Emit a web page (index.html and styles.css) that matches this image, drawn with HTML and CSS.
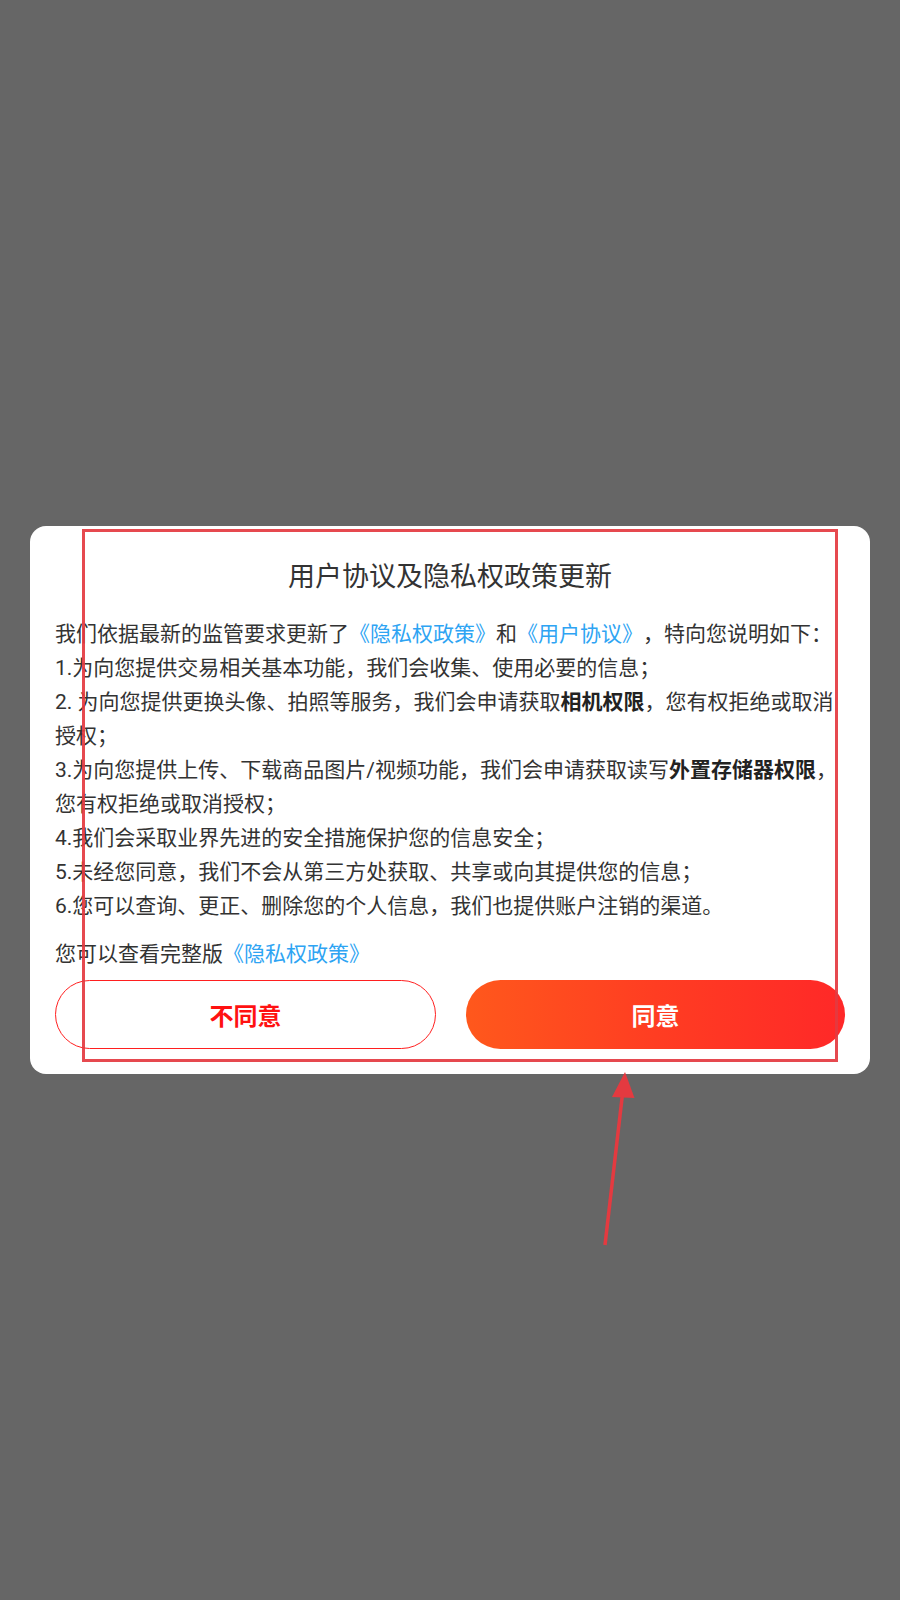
FILE: index.html
```html
<!DOCTYPE html>
<html lang="zh-CN">
<head>
<meta charset="utf-8">
<title>用户协议及隐私权政策更新</title>
<link rel="stylesheet" href="styles.css">
</head>
<body>
<div class="screen">
  <div class="dialog">
    <h1 class="title">用户协议及隐私权政策更新</h1>
    <div class="content">
      <p class="line">我们依据最新的监管要求更新了<span class="link">《隐私权政策》</span>和<span class="link">《用户协议》</span>，特向您说明如下：</p>
      <p class="line">1.为向您提供交易相关基本功能，我们会收集、使用必要的信息；</p>
      <p class="line">2. 为向您提供更换头像、拍照等服务，我们会申请获取<b>相机权限</b>，您有权拒绝或取消授权；</p>
      <p class="line">3.为向您提供上传、下载商品图片/视频功能，我们会申请获取读写<b>外置存储器权限</b>，您有权拒绝或取消授权；</p>
      <p class="line">4.我们会采取业界先进的安全措施保护您的信息安全；</p>
      <p class="line">5.未经您同意，我们不会从第三方处获取、共享或向其提供您的信息；</p>
      <p class="line">6.您可以查询、更正、删除您的个人信息，我们也提供账户注销的渠道。</p>
    </div>
    <p class="more">您可以查看完整版<span class="link">《隐私权政策》</span></p>
    <div class="actions">
      <button class="btn btn-decline">不同意</button>
      <button class="btn btn-agree">同意</button>
    </div>
  </div>
  <svg class="annotation" width="900" height="1600" viewBox="0 0 900 1600">
    <rect x="83.5" y="530.5" width="753" height="530" fill="none" stroke="#e43a40" stroke-width="3" opacity="0.92"/>
    <line x1="605" y1="1245" x2="622.5" y2="1094" stroke="#e43a40" stroke-width="3.5"/>
    <polygon points="625,1072 612,1097 634.5,1098" fill="#e43a40"/>
  </svg>
</div>
</body>
</html>
```

FILE: styles.css
```css
* {
  box-sizing: border-box;
}

html, body {
  margin: 0;
  padding: 0;
  background: #666666;
}

.screen {
  position: relative;
  width: 900px;
  height: 1600px;
  display: flex;
  align-items: center;
  justify-content: center;
  font-family: Roboto, "Noto Sans CJK SC", sans-serif;
  text-spacing-trim: space-all;
}

.dialog {
  width: 840px;
  background: #ffffff;
  border-radius: 16px;
  padding: 32px 25px 25px;
  display: flex;
  flex-direction: column;
}

.title {
  margin: 0;
  font-size: 27px;
  line-height: 38px;
  font-weight: 400;
  color: #333333;
  text-align: center;
}

.content {
  margin-top: 21px;
}

.line,
.more {
  margin: 0;
  font-size: 21px;
  line-height: 34px;
  color: #333333;
}

.line b {
  font-weight: 700;
  color: #222222;
}

.link {
  color: #2ea4f3;
}

.more {
  margin-top: 14px;
}

.actions {
  margin-top: 9px;
  display: flex;
  gap: 30px;
}

.btn {
  flex: 1;
  height: 69px;
  border-radius: 35px;
  font-family: Roboto, "Noto Sans CJK SC", sans-serif;
  font-size: 24px;
  font-weight: 700;
  cursor: pointer;
}

.btn-decline {
  background: #ffffff;
  border: 1px solid #ff1f1f;
  color: #ff1111;
}

.btn-agree {
  border: none;
  color: #ffffff;
  background: linear-gradient(90deg, #ff581c 0%, #ff3d22 50%, #ff2828 100%);
}

.annotation {
  position: absolute;
  left: 0;
  top: 0;
  pointer-events: none;
}
```
